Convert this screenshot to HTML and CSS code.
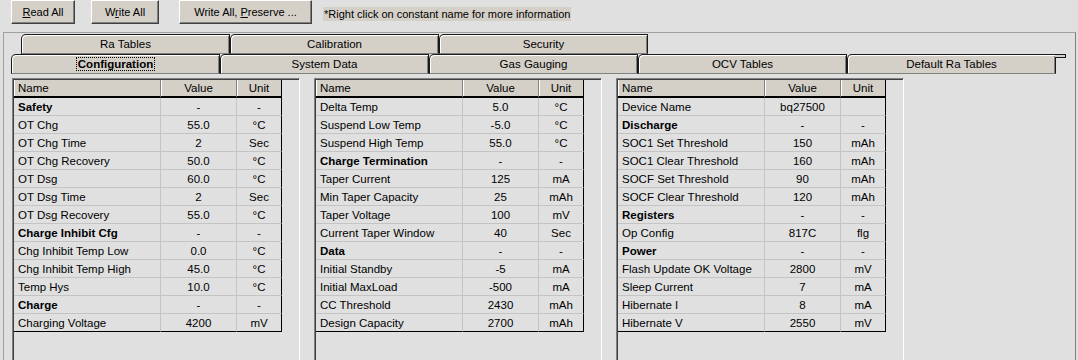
FILE: index.html
```html
<!doctype html>
<html lang="en">
<head>
    <meta charset="UTF-8">
    <title>Data Flash</title>
    <link rel="stylesheet" href="styles.css">
</head>
<body>
<div class="toolbar">
    <button class="btn btn-read"><u>R</u>ead All</button>
    <button class="btn btn-write">W<u>r</u>ite All</button>
    <button class="btn btn-preserve">Write All, <u>P</u>reserve ...</button>
    <span class="hint">*Right click on constant name for more information</span>
</div>
<div class="tabctl">
    <div class="tabrow back">
        <div class="tab">Ra Tables</div>
        <div class="tab">Calibration</div>
        <div class="tab">Security</div>
    </div>
    <div class="tabrow front">
        <div class="tab active"><span class="focus">Configuration</span></div>
        <div class="tab">System Data</div>
        <div class="tab">Gas Gauging</div>
        <div class="tab">OCV Tables</div>
        <div class="tab last">Default Ra Tables</div>
    </div>
    <div class="panel">
        <div class="gridbox">
            <table class="grid">
                <tr><th class="c-name">Name</th><th class="c-val">Value</th><th class="c-unit">Unit</th></tr>
                <tr class="sec"><td>Safety</td><td>-</td><td>-</td></tr>
                <tr><td>OT Chg</td><td>55.0</td><td>°C</td></tr>
                <tr><td>OT Chg Time</td><td>2</td><td>Sec</td></tr>
                <tr><td>OT Chg Recovery</td><td>50.0</td><td>°C</td></tr>
                <tr><td>OT Dsg</td><td>60.0</td><td>°C</td></tr>
                <tr><td>OT Dsg Time</td><td>2</td><td>Sec</td></tr>
                <tr><td>OT Dsg Recovery</td><td>55.0</td><td>°C</td></tr>
                <tr class="sec"><td>Charge Inhibit Cfg</td><td>-</td><td>-</td></tr>
                <tr><td>Chg Inhibit Temp Low</td><td>0.0</td><td>°C</td></tr>
                <tr><td>Chg Inhibit Temp High</td><td>45.0</td><td>°C</td></tr>
                <tr><td>Temp Hys</td><td>10.0</td><td>°C</td></tr>
                <tr class="sec"><td>Charge</td><td>-</td><td>-</td></tr>
                <tr><td>Charging Voltage</td><td>4200</td><td>mV</td></tr>
            </table>
        </div>
        <div class="gridbox">
            <table class="grid">
                <tr><th class="c-name">Name</th><th class="c-val">Value</th><th class="c-unit">Unit</th></tr>
                <tr><td>Delta Temp</td><td>5.0</td><td>°C</td></tr>
                <tr><td>Suspend Low Temp</td><td>-5.0</td><td>°C</td></tr>
                <tr><td>Suspend High Temp</td><td>55.0</td><td>°C</td></tr>
                <tr class="sec"><td>Charge Termination</td><td>-</td><td>-</td></tr>
                <tr><td>Taper Current</td><td>125</td><td>mA</td></tr>
                <tr><td>Min Taper Capacity</td><td>25</td><td>mAh</td></tr>
                <tr><td>Taper Voltage</td><td>100</td><td>mV</td></tr>
                <tr><td>Current Taper Window</td><td>40</td><td>Sec</td></tr>
                <tr class="sec"><td>Data</td><td>-</td><td>-</td></tr>
                <tr><td>Initial Standby</td><td>-5</td><td>mA</td></tr>
                <tr><td>Initial MaxLoad</td><td>-500</td><td>mA</td></tr>
                <tr><td>CC Threshold</td><td>2430</td><td>mAh</td></tr>
                <tr><td>Design Capacity</td><td>2700</td><td>mAh</td></tr>
            </table>
        </div>
        <div class="gridbox">
            <table class="grid">
                <tr><th class="c-name">Name</th><th class="c-val">Value</th><th class="c-unit">Unit</th></tr>
                <tr><td>Device Name</td><td>bq27500</td><td></td></tr>
                <tr class="sec"><td>Discharge</td><td>-</td><td>-</td></tr>
                <tr><td>SOC1 Set Threshold</td><td>150</td><td>mAh</td></tr>
                <tr><td>SOC1 Clear Threshold</td><td>160</td><td>mAh</td></tr>
                <tr><td>SOCF Set Threshold</td><td>90</td><td>mAh</td></tr>
                <tr><td>SOCF Clear Threshold</td><td>120</td><td>mAh</td></tr>
                <tr class="sec"><td>Registers</td><td>-</td><td>-</td></tr>
                <tr><td>Op Config</td><td>817C</td><td>flg</td></tr>
                <tr class="sec"><td>Power</td><td>-</td><td>-</td></tr>
                <tr><td>Flash Update OK Voltage</td><td>2800</td><td>mV</td></tr>
                <tr><td>Sleep Current</td><td>7</td><td>mA</td></tr>
                <tr><td>Hibernate I</td><td>8</td><td>mA</td></tr>
                <tr><td>Hibernate V</td><td>2550</td><td>mV</td></tr>
            </table>
        </div>
    </div>
</div>
</body>
</html>
```

FILE: styles.css
```css
body {
    margin: 0;
    height: 360px;
    overflow: hidden;
    background-color: #e0e0e0;
    font-family: "Liberation Sans", Arial, sans-serif;
    font-size: 11px;
    color: #000000;
}

/* Toolbar */
.toolbar {
    display: flex;
    align-items: flex-start;
    height: 24px;
    padding-left: 11px;
}

.btn {
    height: 24px;
    box-sizing: border-box;
    padding: 0;
    background-color: #d4d0c8;
    border: 1px solid;
    border-color: #ffffff #404040 #404040 #ffffff;
    box-shadow: inset -1px -1px 0 #808080;
    font-family: "Liberation Sans", Arial, sans-serif;
    font-size: 11px;
    color: #000000;
}

.btn-read {
    width: 64px;
    margin-right: 16px;
}

.btn-write {
    width: 68px;
    margin-right: 20px;
}

.btn-preserve {
    width: 133px;
    margin-right: 11px;
}

.hint {
    margin-top: 7px;
    height: 14px;
    line-height: 14px;
    padding: 0 1px;
    background-color: #d4d0c8;
}

/* Tab control */
.tabctl {
    margin: 8px 0 0 3px;
    width: 1073px;
    height: 340px;
    box-sizing: border-box;
    padding-top: 1px;
    border: 1px solid #a0a0a0;
    border-right-color: #808080;
    border-bottom: none;
}

.tabrow {
    display: flex;
    height: 20px;
}

.tabrow.back {
    padding-left: 17px;
}

.tabrow.front {
    padding-left: 7px;
}

.tab {
    position: relative;
    width: 209px;
    height: 20px;
    box-sizing: border-box;
    padding-top: 1px;
    background-color: #d4d0c8;
    border: 1px solid #1a1a1a;
    border-bottom-color: #808080;
    border-top-left-radius: 5px;
    box-shadow: inset 1px 1px 0 #ffffff, inset -1px 0 0 #808080;
    text-align: center;
    font-size: 11.5px;
    line-height: 17px;
}

.tab.active {
    font-weight: bold;
}

.tab .focus {
    outline: 1px dotted #000000;
    padding: 0 1px;
}

.tab.last::after {
    content: "";
    position: absolute;
    top: -1px;
    right: -11px;
    width: 10px;
    height: 2px;
    background-color: #d4d0c8;
    border: 1px solid #1a1a1a;
    border-left: none;
}

/* Grids */
.panel {
    display: flex;
    gap: 14px;
    padding: 4px 0 0 8px;
}

.gridbox {
    width: 288px;
    height: 300px;
    box-sizing: border-box;
    padding: 1px 0 0 1px;
    border: 1px solid;
    border-color: #808080 #ffffff #ffffff #808080;
    box-shadow: inset 1px 1px 0 #404040;
}

.grid {
    border-collapse: separate;
    border-spacing: 0;
    table-layout: fixed;
    width: 268px;
    font-size: 11.5px;
}

.grid th {
    height: 15px;
    padding: 1px 4px 0;
    line-height: 15px;
    font-weight: normal;
    background-color: #d4d0c8;
    border-right: 1px solid #808080;
    border-bottom: 2px solid #000000;
    box-shadow: inset 1px 0 0 #ffffff;
}

.grid .c-name {
    width: 147px;
    text-align: left;
    box-sizing: border-box;
}

.grid .c-val {
    width: 76px;
    box-sizing: border-box;
}

.grid .c-unit {
    width: 45px;
    box-sizing: border-box;
    border-right-color: #000000;
}

.grid td {
    height: 15px;
    padding: 2px 4px 0;
    line-height: 15px;
    white-space: nowrap;
    overflow: hidden;
    text-align: center;
    border-right: 1px solid #c4c4c4;
    border-bottom: 1px solid #c4c4c4;
}

.grid td:first-child {
    text-align: left;
}

.grid td:last-child {
    border-right-color: #000000;
}

.grid tr:last-child td {
    border-bottom-color: #000000;
}

.grid tr.sec td:first-child {
    font-weight: bold;
}
```
